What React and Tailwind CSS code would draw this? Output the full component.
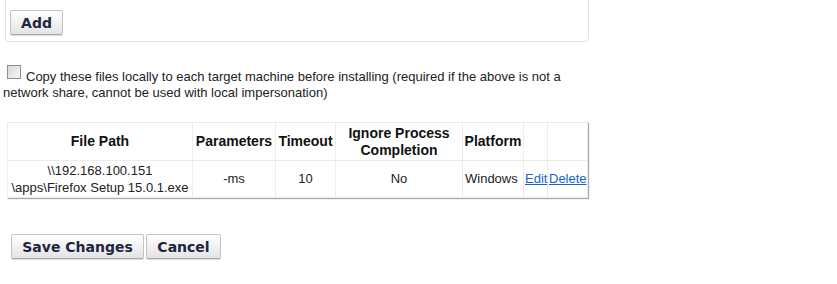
import React from 'react';

const btn = "h-[25px] px-[8px] border border-[#c4c4c4] border-b-[#a9a9a9] rounded-[2px] bg-gradient-to-b from-white to-[#e4e4e4] text-[14px] font-bold text-[#1e2640] font-['DejaVu_Sans',sans-serif] leading-none shadow-[0_1px_0_#ddd]";

const cols = [
    { label: "File Path", w: "w-[185px]" },
    { label: "Parameters", w: "w-[83px]" },
    { label: "Timeout", w: "w-[60px]" },
    { label: "Ignore Process Completion", w: "w-[127px]" },
    { label: "Platform", w: "w-[61px]" },
    { label: "", w: "w-[24px]" },
    { label: "", w: "w-[40px]" },
];

export default function App() {
    return (
        <div className="w-[837px] h-[284px] bg-white font-['Liberation_Sans',Arial,sans-serif] text-[13px] text-[#222] overflow-hidden">
            <div className="ml-[5px] w-[584px] h-[42px] border-l border-r border-b border-[#dbe2ea] rounded-b-[4px] pl-[4px] pt-[10px]">
                <button className={btn + " w-[53px]"}>Add</button>
            </div>

            <div className="mt-[27px] ml-[3px] w-[585px] leading-[16px]">
                <input type="checkbox" className="inline-block w-[14px] h-[14px] ml-[4px] mr-[5px] mt-[-4px] align-[2px] appearance-none border border-[#8f8f8f] bg-gradient-to-br from-[#d8d8d8] to-[#f6f6f6]" />
                Copy these files locally to each target machine before installing (required if the above is not a network share, cannot be used with local impersonation)
            </div>

            <div className="mt-[21px] ml-[7px] w-[581px] shadow-[1px_1px_1px_#aaa]">
                <table className="border-collapse table-fixed w-[580px]">
                    <thead>
                        <tr className="h-[38px]">
                            {cols.map((c, i) => (
                                <th key={i} className={c.w + " border border-[#ececec] font-bold text-[14px] leading-[17px] text-[#111] p-0 text-center"}>{c.label}</th>
                            ))}
                        </tr>
                    </thead>
                    <tbody>
                        <tr className="h-[37px] text-center">
                            <td className="border border-[#ececec] leading-[17px] p-0">\\192.168.100.151<br />\apps\Firefox Setup 15.0.1.exe</td>
                            <td className="border border-[#ececec]">-ms</td>
                            <td className="border border-[#ececec]">10</td>
                            <td className="border border-[#ececec]">No</td>
                            <td className="border border-[#ececec] text-left pl-[2px]">Windows</td>
                            <td className="border border-[#ececec] text-left pl-[1px]"><a href="#" className="text-[#1a5fd0] underline">Edit</a></td>
                            <td className="border border-[#ececec] text-left pl-[1px]"><a href="#" className="text-[#1a5fd0] underline">Delete</a></td>
                        </tr>
                    </tbody>
                </table>
            </div>

            <div className="mt-[36px] ml-[11px] flex gap-[2px]">
                <button className={btn + " w-[133px]"}>Save Changes</button>
                <button className={btn + " w-[75px]"}>Cancel</button>
            </div>
        </div>
    );
}
